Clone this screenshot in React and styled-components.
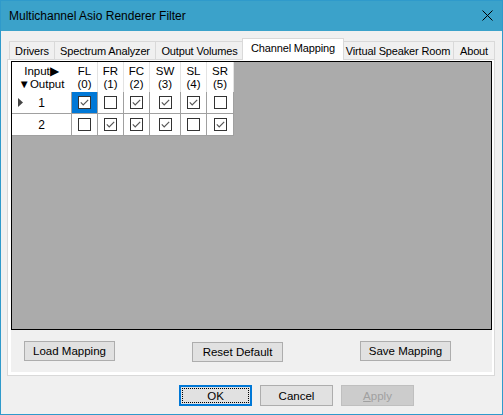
import React from "react";
import styled, { createGlobalStyle } from "styled-components";

const GlobalStyle = createGlobalStyle`
  html, body {
    margin: 0;
    padding: 0;
    background: #ffffff;
  }
  * {
    box-sizing: border-box;
  }
`;

const Window = styled.div`
  width: 503px;
  height: 415px;
  border: 1px solid #2f9acb;
  background: #f0f0f0;
  display: flex;
  flex-direction: column;
  font-family: "Liberation Sans", Arial, sans-serif;
  font-size: 11px;
  color: #000;
  overflow: hidden;
`;

const TitleBar = styled.div`
  height: 30px;
  flex: none;
  background: #3ba2ca;
  display: flex;
  align-items: center;
  justify-content: space-between;
  padding: 0 9px 0 8px;
`;

const Title = styled.span`
  font-size: 12px;
  color: #000;
  margin-top: -1px;
`;

const CloseIcon = styled.svg`
  width: 11px;
  height: 11px;
  margin-top: -1px;
`;

const Body = styled.div`
  padding: 7px 7px 0 6px;
  display: flex;
  flex-direction: column;
`;

const TabStrip = styled.div`
  display: flex;
  align-items: flex-end;
  height: 21px;
  margin-left: 2px;
  position: relative;
  z-index: 1;
`;

const Tab = styled.div`
  flex: none;
  width: ${(p) => p.$w}px;
  height: ${(p) => (p.$active ? 22 : 18)}px;
  margin-bottom: ${(p) => (p.$active ? -1 : 0)}px;
  margin-left: ${(p) => (p.$active ? -2 : -1)}px;
  margin-right: ${(p) => (p.$active ? -1 : 0)}px;
  border: 1px solid #d9d9d9;
  border-bottom: none;
  background: ${(p) => (p.$active ? "#ffffff" : "#f0f0f0")};
  display: flex;
  justify-content: center;
  padding-top: 3px;
  letter-spacing: -0.15px;
  white-space: nowrap;
  position: relative;
  z-index: ${(p) => (p.$active ? 2 : 0)};
  &:first-child {
    margin-left: 0;
  }
`;

const Panel = styled.div`
  border: 1px solid #d9d9d9;
  background: #ffffff;
  padding: 1px 2px 3px 3px;
  height: 317px;
`;

const Page = styled.div`
  background: #f0f0f0;
  height: 100%;
  display: flex;
  flex-direction: column;
`;

const GridBox = styled.div`
  height: 269px;
  border: 1px solid #000;
  background: #ababab;
  flex: none;
`;

const Table = styled.div`
  display: grid;
  grid-template-columns: 60px 26px 26px 26px 31px 26px 27px;
  grid-template-rows: 30px 22px 22px;
  width: 222px;
  background: #ffffff;
`;

const HeadCell = styled.div`
  display: flex;
  flex-direction: column;
  align-items: center;
  justify-content: center;
  line-height: 13px;
  font-size: 11.5px;
  border-right: 1px solid ${(p) => (p.$corner ? "#ffffff" : "#e3e3e3")};
  padding-top: 1px;
`;

const RowHead = styled.div`
  display: grid;
  grid-template-columns: 17px 1fr 17px;
  align-items: center;
  border-right: 1px solid #a0a0a0;
  border-bottom: 1px solid #a0a0a0;
  font-size: 12px;
`;

const RowArrow = styled.svg`
  width: 5px;
  height: 9px;
  margin-left: 6px;
`;

const RowNum = styled.span`
  text-align: center;
`;

const Cell = styled.div`
  display: flex;
  align-items: center;
  justify-content: center;
  border-right: 1px solid #a0a0a0;
  border-bottom: 1px solid #a0a0a0;
  background: ${(p) => (p.$selected ? "#0078d7" : "#ffffff")};
`;

const BoxSvg = styled.svg`
  width: 13px;
  height: 13px;
  display: block;
`;

const ActionRow = styled.div`
  display: flex;
  align-items: flex-start;
  gap: 77px;
  padding-left: 13px;
  margin-top: 11px;
`;

const Button = styled.button`
  width: ${(p) => p.$w || 73}px;
  height: ${(p) => p.$h || 21}px;
  margin-top: ${(p) => p.$drop || 0}px;
  background: ${(p) => (p.$disabled ? "#cccccc" : "#e1e1e1")};
  border: ${(p) => (p.$default ? "2px solid #0078d7" : p.$disabled ? "1px solid #bfbfbf" : "1px solid #adadad")};
  color: ${(p) => (p.$disabled ? "#a0a0a0" : "#000")};
  font-family: "Liberation Sans", Arial, sans-serif;
  font-size: 11.5px;
  padding: 0;
  position: relative;
  display: flex;
  align-items: center;
  justify-content: center;
  &::after {
    content: "";
    display: ${(p) => (p.$default ? "block" : "none")};
    position: absolute;
    inset: 1px;
    border: 1px dotted #000;
  }
`;

const Footer = styled.div`
  display: flex;
  gap: 8px;
  padding-left: 172px;
  margin-top: 9px;
`;

const Mnemonic = styled.span`
  text-decoration: underline;
`;

const columns = [
  ["FL", "(0)"],
  ["FR", "(1)"],
  ["FC", "(2)"],
  ["SW", "(3)"],
  ["SL", "(4)"],
  ["SR", "(5)"],
];

const mapping = [
  [1, 0, 1, 1, 1, 0],
  [0, 1, 1, 1, 0, 1],
];

const tabs = [
  { label: "Drivers", w: 46 },
  { label: "Spectrum Analyzer", w: 102 },
  { label: "Output Volumes", w: 89 },
  { label: "Channel Mapping", w: 102, active: true },
  { label: "Virtual Speaker Room", w: 112 },
  { label: "About", w: 42 },
];

const CheckBox = ({ checked }) => (
  <BoxSvg viewBox="0 0 13 13">
    <rect x="0.5" y="0.5" width="12" height="12" fill="#fff" stroke="#333" />
    {checked ? (
      <path d="M2.8 6.4 L5.2 8.8 L10.2 3.8" fill="none" stroke="#555" strokeWidth="1.2" />
    ) : null}
  </BoxSvg>
);

export default function App() {
  return (
    <>
      <GlobalStyle />
      <Window>
        <TitleBar>
          <Title>Multichannel Asio Renderer Filter</Title>
          <CloseIcon viewBox="0 0 11 11">
            <path d="M0.5 0.5 L10.5 10.5 M10.5 0.5 L0.5 10.5" stroke="#000" strokeWidth="1" />
          </CloseIcon>
        </TitleBar>
        <Body>
          <TabStrip>
            {tabs.map((t) => (
              <Tab key={t.label} $w={t.w} $active={t.active}>
                {t.label}
              </Tab>
            ))}
          </TabStrip>
          <Panel>
            <Page>
              <GridBox>
                <Table>
                  <HeadCell $corner>
                    <span>Input▶</span>
                    <span>▼Output</span>
                  </HeadCell>
                  {columns.map(([name, idx]) => (
                    <HeadCell key={name}>
                      <span>{name}</span>
                      <span>{idx}</span>
                    </HeadCell>
                  ))}
                  {mapping.map((row, r) => (
                    <React.Fragment key={"row_" + r}>
                      <RowHead>
                        {r === 0 ? (
                          <RowArrow viewBox="0 0 5 9">
                            <polygon points="0,0 5,4.5 0,9" fill="#444" />
                          </RowArrow>
                        ) : (
                          <span />
                        )}
                        <RowNum>{r + 1}</RowNum>
                      </RowHead>
                      {row.map((v, c) => (
                        <Cell key={"cell_" + r + "_" + c} $selected={r === 0 && c === 0}>
                          <CheckBox checked={v === 1} />
                        </Cell>
                      ))}
                    </React.Fragment>
                  ))}
                </Table>
              </GridBox>
              <ActionRow>
                <Button $w={91} $h={20}>Load Mapping</Button>
                <Button $w={91} $h={20} $drop={1}>Reset Default</Button>
                <Button $w={91} $h={20}>Save Mapping</Button>
              </ActionRow>
            </Page>
          </Panel>
          <Footer>
            <Button $default>OK</Button>
            <Button>Cancel</Button>
            <Button $disabled>
              <span>
                <Mnemonic>A</Mnemonic>pply
              </span>
            </Button>
          </Footer>
        </Body>
      </Window>
    </>
  );
}
